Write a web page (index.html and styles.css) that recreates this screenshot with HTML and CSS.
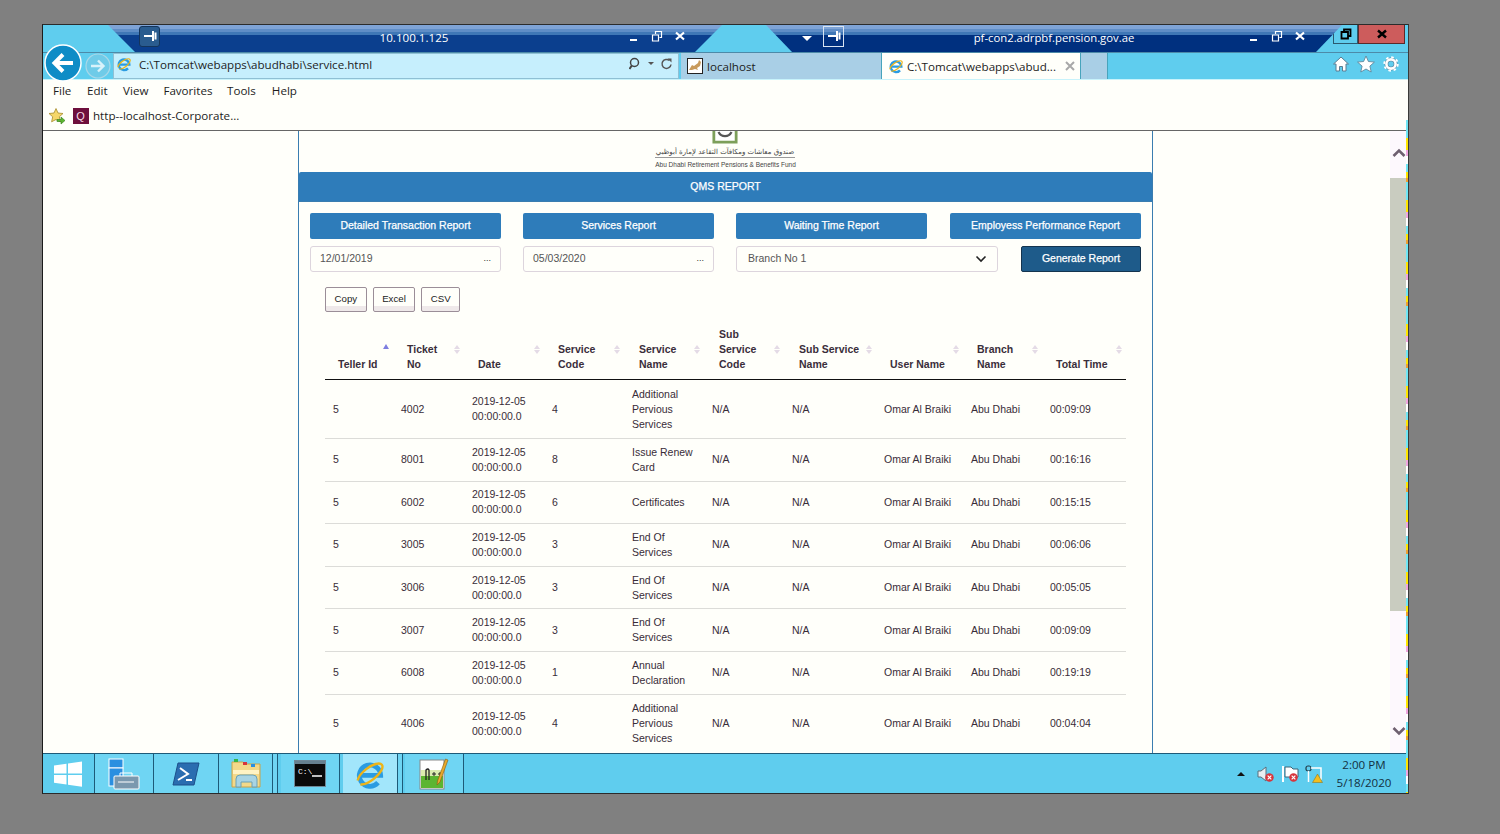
FILE: index.html
```html
<!DOCTYPE html>
<html lang="en">
<head>
<meta charset="utf-8">
<title>QMS Report</title>
<link rel="stylesheet" href="styles.css">
</head>
<body>
<svg class="defs" width="0" height="0" aria-hidden="true">
  <defs>
    <symbol id="pin" viewBox="0 0 14 14"><path d="M1 7h9M10 2v10M12.500 3.500v7" fill="none" stroke="#fff" stroke-width="2"/></symbol>
    <symbol id="min" viewBox="0 0 12 12"><path d="M2 10h7" stroke="#fff" stroke-width="2"/></symbol>
    <symbol id="rest" viewBox="0 0 12 12"><path d="M1.500 5h6v6h-6zM4.500 4V1.500h6v6H8.500" fill="none" stroke="#fff" stroke-width="1.200"/></symbol>
    <symbol id="cls" viewBox="0 0 12 12"><path d="M2 2.500l8 7M10 2.500l-8 7" stroke="#fff" stroke-width="2.200"/></symbol>
    <symbol id="ie" viewBox="0 0 24 24">
      <path d="M4.500 13H20A8 8 0 1 0 18 18.500" fill="none" stroke="#2a9ce2" stroke-width="3.600"/>
      <ellipse cx="12" cy="12" rx="11.300" ry="4.600" transform="rotate(-38 12 12)" fill="none" stroke="#eeb417" stroke-width="1.800" stroke-dasharray="24 4 30 0"/>
    </symbol>
    <symbol id="ring" viewBox="0 0 12 12"><circle cx="6" cy="6" r="4.600" fill="#d8343c"/><path d="M4 4l4 4M8 4l-4 4" stroke="#fff" stroke-width="1.300"/></symbol>
  </defs>
</svg>

<div class="win">
  <div class="titles">
    <div class="bar bar-one">
      <span class="pin pin-dark"><svg class="i14"><use href="#pin"/></svg></span>
      <span class="bar-title bar-title-one">10.100.1.125</span>
      <span class="ctls">
        <svg class="i12"><use href="#min"/></svg>
        <svg class="i12"><use href="#rest"/></svg>
        <svg class="i12"><use href="#cls"/></svg>
      </span>
    </div>
    <div class="bar bar-two">
      <span class="caret"></span>
      <span class="pin pin-line"><svg class="i14"><use href="#pin"/></svg></span>
      <span class="bar-title bar-title-two">pf-con2.adrpbf.pension.gov.ae</span>
      <span class="ctls">
        <svg class="i12"><use href="#min"/></svg>
        <svg class="i12"><use href="#rest"/></svg>
        <svg class="i12"><use href="#cls"/></svg>
      </span>
    </div>
    <div class="outer-ctl">
      <span class="outer-restore"><svg class="i12" viewBox="0 0 12 12"><path d="M1.500 4h6.500v6.500H1.500zM4 3.500V1.500h6.500V8H8.500" fill="none" stroke="#000" stroke-width="1.800"/></svg></span>
      <span class="outer-close"><svg class="i12" viewBox="0 0 12 12"><path d="M2 2.500l8 7M10 2.500l-8 7" stroke="#000" stroke-width="2.400"/></svg></span>
    </div>
  </div>

  <div class="tools">
    <svg class="back" viewBox="0 0 38 38"><circle cx="19" cy="19" r="18" fill="#0e8cc6" stroke="#fff" stroke-width="1.500"/><path d="M29 19H11M19 10.500L10.500 19l8.500 8.500" fill="none" stroke="#fff" stroke-width="4"/></svg>
    <svg class="forward" viewBox="0 0 26 26"><circle cx="13" cy="13" r="12" fill="#6fcbe8" stroke="#a8d8e8" stroke-width="1.200"/><path d="M6 13h12M13 7.500l5.500 5.500-5.500 5.500" fill="none" stroke="#d8f2fa" stroke-width="2.400"/></svg>
    <div class="address">
      <svg class="i16 addr-ie"><use href="#ie"/></svg>
      <span class="address-text">C:\Tomcat\webapps\abudhabi\service.html</span>
      <svg class="addr-tools" viewBox="0 0 48 14"><circle cx="5.500" cy="5.500" r="4" fill="none" stroke="#444" stroke-width="1.500"/><path d="M2.800 8.500L0.500 12" stroke="#444" stroke-width="2"/><path d="M19 5h6l-3 3z" fill="#555"/><path d="M40.500 3.500a4.500 4.500 0 1 0 1.500 4" fill="none" stroke="#555" stroke-width="1.500"/><path d="M38.500 1.500h4v4z" fill="#555"/></svg>
    </div>
    <div class="tab tab-off">
      <svg class="i16" viewBox="0 0 16 16"><rect x=".5" y=".5" width="15" height="15" fill="#fff" stroke="#222"/><path d="M2 12l3-5 2 1 4-3 1-3 2 2-1 4-3 2 1 2-3-1-3 1z" fill="#c89a5c"/></svg>
      <span>localhost</span>
    </div>
    <div class="tab tab-on">
      <svg class="i16"><use href="#ie"/></svg>
      <span class="tab-label">C:\Tomcat\webapps\abud...</span>
      <svg class="tab-x" viewBox="0 0 10 10"><path d="M1 1l8 8M9 1L1 9" stroke="#a8a8a8" stroke-width="2"/></svg>
    </div>
    <div class="tab tab-stub"></div>
    <div class="tool-icons">
      <svg class="i18" viewBox="0 0 18 18"><path d="M1.500 9L9 2l7.500 7H14v7h-3.500v-4.500h-3V16H4V9z" fill="#fff" stroke="#5a7d92"/></svg>
      <svg class="i18" viewBox="0 0 18 18"><path d="M9 1l2.400 5.500 6 .6-4.500 4 1.300 5.900L9 14l-5.200 3 1.300-5.900-4.500-4 6-.6z" fill="#fff" stroke="#5a7d92" stroke-width=".8"/></svg>
      <svg class="i18" viewBox="0 0 18 18"><circle cx="9" cy="9" r="4.600" fill="none" stroke="#5a7d92" stroke-width="3.800"/><circle cx="9" cy="9" r="4.600" fill="none" stroke="#fff" stroke-width="2.600"/><circle cx="9" cy="9" r="6.800" fill="none" stroke="#fff" stroke-width="1.800" stroke-dasharray="2.600 2.740"/></svg>
    </div>
  </div>

  <nav class="menu">
    <span class="m-file">File</span><span class="m-edit">Edit</span><span class="m-view">View</span><span class="m-fav">Favorites</span><span class="m-tools">Tools</span><span class="m-help">Help</span>
  </nav>

  <div class="favs">
    <svg class="i18" viewBox="0 0 18 18"><path d="M8 1.500l2 4.500 5 .5-3.700 3.300 1.100 5L8 12.500l-4.400 2.300 1.100-5L1 6.500 6 6z" fill="#f5d76a" stroke="#a68a2c" stroke-width=".8"/><path d="M9 12.500h4v-2.500l4 3.500-4 3.500v-2.500H9z" fill="#5cb531" stroke="#2f7a16" stroke-width=".6"/></svg>
    <span class="q-icon">Q</span>
    <span>http--localhost-Corporate...</span>
  </div>

  <div class="main">
    <div class="page">
      <div class="panel">
        <div class="logo">
          <svg class="logo-mark" viewBox="0 0 28 14"><path d="M2 0v12h24V0" fill="#fff" stroke="#7d9f5a" stroke-width="3"/><path d="M7 1c3 6 11 6 14 0" fill="none" stroke="#555" stroke-width="2.400"/></svg>
          <div class="logo-ar">صندوق معاشات ومكافآت التقاعد لإمارة أبوظبي</div>
          <div class="logo-en">Abu Dhabi Retirement Pensions &amp; Benefits Fund</div>
        </div>
        <div class="heading">QMS REPORT</div>
        <div class="report-row">
          <a class="btn btn-w">Detailed Transaction Report</a>
          <a class="btn btn-w">Services Report</a>
          <a class="btn btn-w">Waiting Time Report</a>
          <a class="btn btn-w">Employess Performance Report</a>
        </div>
        <div class="filter-row">
          <div class="field field-date"><span>12/01/2019</span><span class="dots">...</span></div>
          <div class="field field-date"><span>05/03/2020</span><span class="dots">...</span></div>
          <div class="field field-select"><span>Branch No 1</span><svg class="chev" viewBox="0 0 12 8"><path d="M1.500 1.500L6 6l4.500-4.500" fill="none" stroke="#222" stroke-width="1.600"/></svg></div>
          <a class="btn btn-gen">Generate Report</a>
        </div>
        <div class="dt-buttons">
          <a class="dt-btn">Copy</a>
          <a class="dt-btn">Excel</a>
          <a class="dt-btn">CSV</a>
        </div>
        <table class="report">
          <colgroup>
            <col class="c68"><col class="c71"><col class="c80"><col class="c80"><col class="c80"><col class="c80"><col class="c92"><col class="c87"><col class="c79"><col class="c84">
          </colgroup>
          <thead>
            <tr>
              <th class="sort-asc">Teller Id</th>
              <th>Ticket<br>No</th>
              <th>Date</th>
              <th>Service<br>Code</th>
              <th>Service<br>Name</th>
              <th>Sub<br>Service<br>Code</th>
              <th>Sub Service<br>Name</th>
              <th>User Name</th>
              <th>Branch<br>Name</th>
              <th>Total Time</th>
            </tr>
          </thead>
          <tbody>
            <tr class="tall"><td>5</td><td>4002</td><td>2019-12-05<br>00:00:00.0</td><td>4</td><td>Additional<br>Pervious<br>Services</td><td>N/A</td><td>N/A</td><td>Omar Al Braiki</td><td>Abu Dhabi</td><td>00:09:09</td></tr>
            <tr><td>5</td><td>8001</td><td>2019-12-05<br>00:00:00.0</td><td>8</td><td>Issue Renew<br>Card</td><td>N/A</td><td>N/A</td><td>Omar Al Braiki</td><td>Abu Dhabi</td><td>00:16:16</td></tr>
            <tr><td>5</td><td>6002</td><td>2019-12-05<br>00:00:00.0</td><td>6</td><td>Certificates</td><td>N/A</td><td>N/A</td><td>Omar Al Braiki</td><td>Abu Dhabi</td><td>00:15:15</td></tr>
            <tr><td>5</td><td>3005</td><td>2019-12-05<br>00:00:00.0</td><td>3</td><td>End Of<br>Services</td><td>N/A</td><td>N/A</td><td>Omar Al Braiki</td><td>Abu Dhabi</td><td>00:06:06</td></tr>
            <tr><td>5</td><td>3006</td><td>2019-12-05<br>00:00:00.0</td><td>3</td><td>End Of<br>Services</td><td>N/A</td><td>N/A</td><td>Omar Al Braiki</td><td>Abu Dhabi</td><td>00:05:05</td></tr>
            <tr><td>5</td><td>3007</td><td>2019-12-05<br>00:00:00.0</td><td>3</td><td>End Of<br>Services</td><td>N/A</td><td>N/A</td><td>Omar Al Braiki</td><td>Abu Dhabi</td><td>00:09:09</td></tr>
            <tr><td>5</td><td>6008</td><td>2019-12-05<br>00:00:00.0</td><td>1</td><td>Annual<br>Declaration</td><td>N/A</td><td>N/A</td><td>Omar Al Braiki</td><td>Abu Dhabi</td><td>00:19:19</td></tr>
            <tr class="tall"><td>5</td><td>4006</td><td>2019-12-05<br>00:00:00.0</td><td>4</td><td>Additional<br>Pervious<br>Services</td><td>N/A</td><td>N/A</td><td>Omar Al Braiki</td><td>Abu Dhabi</td><td>00:04:04</td></tr>
          </tbody>
        </table>
      </div>
    </div>
    <div class="scroll">
      <svg class="scroll-up" viewBox="0 0 14 10"><path d="M1.500 8L7 2.500 12.500 8" fill="none" stroke="#6e5f70" stroke-width="2.600"/></svg>
      <div class="thumb"></div>
      <svg class="scroll-down" viewBox="0 0 14 10"><path d="M1.500 2L7 7.500 12.500 2" fill="none" stroke="#6e5f70" stroke-width="2.600"/></svg>
    </div>
  </div>

  <div class="taskbar">
    <div class="task t-start"><svg class="i26" viewBox="0 0 28 26"><path d="M0 4.500L12.500 2.800v9.600H0zM14 2.600L28 .5v11.900H14zM0 14h12.500v9.500L0 21.800zM14 14h14v11.800L14 23.700z" fill="#fff"/></svg></div>
    <div class="task t-58"><svg class="i32" viewBox="0 0 32 32"><rect x="1" y="1" width="14" height="9" fill="#2a8fe0" stroke="#fff"/><rect x="1" y="10" width="14" height="18" fill="#2a8fe0" stroke="#fff"/><rect x="6" y="18" width="25" height="13" rx="1" fill="#7a98ae" stroke="#fff"/><path d="M12 18v-3h12v3" fill="none" stroke="#fff"/><path d="M10 24h16" stroke="#fff"/></svg></div>
    <div class="task t-64"><svg class="i28" viewBox="0 0 28 24"><path d="M6 1h21l-5 22H1z" fill="#2a6db0" stroke="#1c4f8a"/><path d="M8 6l8 6-10 6M14 18h6" fill="none" stroke="#fff" stroke-width="2"/></svg></div>
    <div class="task t-54"><svg class="i32" viewBox="0 0 32 32"><path d="M2 4h11l2 2h15v23H2z" fill="#f3d98a" stroke="#c9a34a"/><rect x="4" y="1" width="4" height="3" fill="#36b54a"/><rect x="13" y="4" width="4" height="3" fill="#d8343c"/><rect x="21" y="6" width="4" height="3" fill="#2a8fe0"/><path d="M3 12h26v4H3z" fill="#fff3c4"/><path d="M6 29v-8q0-4 4-4h13q4 0 4 4v8h-5v-5h-11v5z" fill="#a8d4e4" stroke="#6ba1b6"/></svg></div>
    <div class="task t-5"></div>
    <div class="task t-58"><svg class="i32" viewBox="0 0 32 28"><rect x=".5" y=".5" width="31" height="26" fill="#0a0a0a" stroke="#6f8796"/><rect x="1" y="1" width="30" height="3" fill="#66808f"/><text x="4" y="14" class="cmd-text">C:\</text><path d="M18 16h10" stroke="#fff" stroke-width="1.500"/></svg></div>
    <div class="task t-56 t-active"><svg class="i32"><use href="#ie"/></svg></div>
    <div class="task t-5 t-5b"></div>
    <div class="task t-58"><svg class="i32" viewBox="0 0 32 32"><rect x="2" y="2" width="24" height="29" fill="#fff" stroke="#8a8a8a"/><path d="M3 18h22v12H3z" fill="#5cb531"/><path d="M3 12h22v6H3z" fill="#dcebb0"/><path d="M8 22V12q2-2 3 0v10" fill="none" stroke="#222" stroke-width="1.300"/><path d="M14 16h4M16 14v4M20 16h4M22 14v4" stroke="#222"/><path d="M30 2l-8 22-3 3 .5-4 8-22z" fill="#e8a92c" stroke="#8a5a10" stroke-width=".6"/></svg></div>
    <div class="tray">
      <span class="tray-up"></span>
      <svg class="i18" viewBox="0 0 18 18"><path d="M1 6h3l5-4v14l-5-4H1z" fill="#e8eef2" stroke="#5b6f7c"/><use href="#ring" x="7" y="7" width="11" height="11"/></svg>
      <svg class="i18" viewBox="0 0 18 18"><path d="M2 1v16" stroke="#fff" stroke-width="2"/><path d="M4 2h6l2 2h5v8H4z" fill="#fff" stroke="#3d6578"/><use href="#ring" x="7" y="7" width="11" height="11"/></svg>
      <svg class="i18" viewBox="0 0 18 18"><rect x="1" y="1" width="5" height="5" rx="2" fill="none" stroke="#223b48" stroke-width="1.200"/><path d="M3.500 6v11M6 3h10v11h-5" fill="none" stroke="#fff" stroke-width="1.500"/><path d="M12.500 9l5 8.500h-10z" fill="#f2bd1d" stroke="#8a6a10" stroke-width=".5"/></svg>
      <div class="clock"><span>2:00 PM</span><span>5/18/2020</span></div>
    </div>
  </div>

  <div class="edge-noise"></div>
</div>
</body>
</html>
```

FILE: styles.css
```css
* { box-sizing: border-box; }
html, body { margin: 0; height: 100%; }
body {
  background: #808080;
  overflow: hidden;
  padding: 24px 0 0 42px;
  font-family: "Open Sans", "Noto Sans", sans-serif;
  color: #1d1d1d;
}
.defs { position: absolute; }
.i12 { width: 12px; height: 12px; display: block; }
.i14 { width: 14px; height: 14px; display: block; }
.i16 { width: 16px; height: 16px; display: block; flex: none; }
.i18 { width: 18px; height: 18px; display: block; flex: none; }
.i26 { width: 28px; height: 26px; display: block; }
.i28 { width: 28px; height: 24px; display: block; }
.i32 { width: 32px; height: 32px; display: block; }

.win {
  position: relative;
  width: 1367px;
  height: 770px;
  display: flex;
  flex-direction: column;
  border-top: 1px solid #2b2b2b;
  border-bottom: 1px solid #2b2b2b;
  border-left: 1px solid #1c1c1c;
  border-right: 1px solid #3a3a3a;
  background: #fffffa;
}

/* remote-session title bars */
.titles {
  height: 27px;
  display: flex;
  background: #5fcdee;
  padding-left: 65px;
}
.bar {
  position: relative;
  z-index: 1;
  height: 27px;
  display: flex;
  align-items: center;
  color: #fff;
  font-size: 11.600px;
}
.bar-one {
  width: 614px;
  padding-left: 31px;
  clip-path: polygon(0 0, 100% 0, 587px 100%, 27px 100%);
  background: linear-gradient(#7ea3d6 0, #7ea3d6 4px, #5f8dc6 4px, #5f8dc6 7px, #3f77b6 7px, #3f77b6 10px, #0b3f8e 10px);
}
.bar-two {
  width: 576px;
  margin-left: 44px;
  padding-left: 37px;
  clip-path: polygon(0 0, 100% 0, 550px 100%, 26px 100%);
  background: linear-gradient(#7ea3d6 0, #7ea3d6 4px, #5f8dc6 4px, #5f8dc6 7px, #3f77b6 7px, #3f77b6 10px, #00307f 10px);
}
.bar-title { flex: 1; text-align: center; padding-bottom: 3px; white-space: nowrap; }
.bar-title-one { padding-left: 40px; }
.bar-title-two { padding-left: 16px; font-size: 11.300px; }
.ctls { display: flex; gap: 11px; align-items: center; padding-bottom: 5px; }
.bar-one .ctls { padding-right: 36px; }
.bar-two .ctls { padding-right: 36px; }
.pin {
  width: 21px;
  height: 21px;
  display: flex;
  align-items: center;
  justify-content: center;
  margin-top: -5px;
}
.pin-dark { background: #2a5c8f; border: 1px solid #14355c; border-radius: 3px; }
.pin-line { border: 1px solid #d8e4f2; margin-left: 11px; }
.caret {
  width: 0;
  height: 0;
  margin-left: -1px;
  border: 5px solid transparent;
  border-top: 5px solid #fff;
  border-bottom: 0;
}
.outer-ctl { display: flex; margin-left: -9px; height: 19px; }
.outer-restore {
  width: 25px;
  display: flex;
  align-items: center;
  justify-content: center;
  border: 1px solid #2b5a70;
  border-top: 0;
}
.outer-close {
  width: 47px;
  display: flex;
  align-items: center;
  justify-content: center;
  background: #cd5c5c;
  border: 1px solid #5b2a2a;
  border-top: 0;
}

/* address bar and tabs */
.tools {
  height: 28px;
  display: flex;
  align-items: center;
  background: #5fcdee;
  border-top: 1px solid #4d8aa8;
  border-bottom: 1px solid #c8f3fb;
}
.back {
  width: 38px;
  height: 38px;
  margin: -6px 0 0 1px;
  flex: none;
  position: relative;
  z-index: 2;
}
.forward { width: 26px; height: 26px; margin-left: 3px; flex: none; }
.address {
  width: 566px;
  height: 26px;
  margin-left: 2px;
  display: flex;
  align-items: center;
  gap: 5px;
  padding: 0 0 4px 2px;
  background: #c6effd;
  border: 1px solid #8fc0d4;
  font-size: 11.600px;
}
.address-text { flex: 1; white-space: nowrap; padding-left: 2px; }
.addr-tools { width: 48px; height: 14px; margin-right: 1px; flex: none; }
.tab {
  height: 26px;
  display: flex;
  align-items: center;
  font-size: 11.600px;
  border-right: 1px solid #47a4bc;
}
.tab-off { width: 201px; margin-left: 2px; padding-left: 6px; gap: 4px; background: #a9cfe6; }
.tab-on { width: 199px; padding-left: 6px; gap: 3px; background: #fffffa; }
.tab-label { flex: 1; white-space: nowrap; }
.tab-x { width: 10px; height: 10px; margin-right: 5px; flex: none; }
.tab-stub { width: 27px; background: #a9cfe6; }
.tool-icons {
  flex: 1;
  display: flex;
  justify-content: flex-end;
  gap: 7px;
  padding: 0 8px 4px 0;
}

/* menu and favourites */
.menu {
  height: 23px;
  padding: 0 0 2px 10px;
  display: flex;
  align-items: center;
  font-size: 11.600px;
  background: #fffffa;
}
.m-edit { margin-left: 15.600px; }
.m-view { margin-left: 15.500px; }
.m-fav { margin-left: 15px; }
.m-tools { margin-left: 14.600px; }
.m-help { margin-left: 16px; }
.favs {
  height: 28px;
  padding: 0 0 2px 5px;
  display: flex;
  align-items: center;
  gap: 6.500px;
  font-size: 11.600px;
  background: #fffffa;
  border-bottom: 1px solid #666;
}
.q-icon {
  width: 16px;
  height: 16px;
  margin-left: 0;
  margin-right: -2px;
  background: #6e0f3c;
  color: #f5d8e4;
  font: 11px/16px "Liberation Sans", sans-serif;
  text-align: center;
}

/* page */
.main { height: 622px; display: flex; background: #fffffa; }
.page { flex: 1; overflow: hidden; }
.panel {
  width: 855px;
  margin-left: 255px;
  height: 700px;
  border-left: 1px solid #3a7db0;
  border-right: 1px solid #3a7db0;
  font-family: "Liberation Sans", Arial, sans-serif;
  color: #382c38;
}
.logo {
  height: 41px;
  text-align: center;
  color: #444;
  overflow: hidden;
}
.logo-mark { display: block; width: 28px; height: 13px; margin: 0 auto; transform: translateX(-1px); }
.logo-ar {
  margin-top: 3px;
  font: 7px/10px "DejaVu Sans", sans-serif;
  width: 140px;
  margin-left: 356px;
  border-bottom: 1px solid #9a9a9a;
  white-space: nowrap;
  overflow: hidden;
  direction: rtl;
}
.logo-en {
  font: 6.500px/9px "Liberation Sans", sans-serif;
  white-space: nowrap;
  margin-top: 2px;
}
.heading {
  height: 30px;
  line-height: 29px;
  text-align: center;
  color: #fff;
  font-size: 10.500px;
  -webkit-text-stroke: .25px #fff;
  background: #2e7cba;
  border-radius: 2px 2px 0 0;
  border-bottom: 1px solid #3a7db0;
}
.report-row {
  display: flex;
  gap: 22px;
  padding-left: 11px;
  margin-top: 11px;
}
.btn {
  height: 26px;
  padding-bottom: 2px;
  display: flex;
  align-items: center;
  justify-content: center;
  color: #fff;
  font-size: 10.500px;
  -webkit-text-stroke: .25px #fff;
  background: #2e7cba;
  border-radius: 2px;
  white-space: nowrap;
}
.btn-w { width: 191px; }
.btn-w:last-child { margin-left: 1px; }
.filter-row {
  display: flex;
  gap: 22px;
  padding-left: 11px;
  margin-top: 7px;
}
.field {
  height: 26px;
  padding-bottom: 2px;
  display: flex;
  align-items: center;
  justify-content: space-between;
  background: #fffffa;
  border: 1px solid #ddd5dd;
  border-radius: 3px;
  font-size: 10.500px;
  color: #555;
}
.field-date { width: 191px; padding: 0 9px 2px; }
.field-select { width: 262px; padding: 0 10px 0 11px; }
.field-select span { padding-bottom: 2px; }
.dots { font-size: 9px; color: #333; }
.chev { width: 12px; height: 8px; }
.btn-gen { width: 120px; margin-left: 1px; background: #1e5b8a; border: 1px solid #14344f; }
.dt-buttons {
  display: flex;
  gap: 6px;
  margin: 15px 0 0 26px;
}
.dt-btn {
  height: 25px;
  padding: 0 8.500px 2px;
  display: flex;
  align-items: center;
  font-size: 9.700px;
  color: #222;
  background: linear-gradient(#fffffa 0, #fffffa 80%, #efe9ea 80%);
  border: 1px solid #9b8e98;
  border-radius: 2px;
}

/* table */
.report {
  table-layout: fixed;
  width: 801px;
  margin: 7px 0 0 26px;
  border-collapse: separate;
  border-spacing: 0;
  font-size: 10.500px;
  line-height: 15px;
}
.c68 { width: 68px; }
.c71 { width: 71px; }
.c80 { width: 80px; }
.c84 { width: 84px; }
.c87 { width: 87px; }
.c92 { width: 92px; }
.c79 { width: 79px; }
.report th {
  position: relative;
  padding: 8px 0 7px 14px;
  text-align: left;
  vertical-align: bottom;
  font-weight: bold;
  border-bottom: 1px solid #111;
  color: #3a2e3a;
  white-space: nowrap;
}
.report th.sort-asc { padding-left: 13px; }
.report th:nth-child(5),
.report th:nth-child(6),
.report th:nth-child(7) { padding-left: 15px; }
.report th::before,
.report th::after {
  content: "";
  position: absolute;
  right: 4px;
  width: 0;
  height: 0;
  border-left: 3.500px solid transparent;
  border-right: 3.500px solid transparent;
}
.report th::before { bottom: 30px; border-bottom: 4px solid #e4dbe6; }
.report th::after { bottom: 25px; border-top: 4px solid #e4dbe6; }
.report th.sort-asc::before { bottom: 30px; border-bottom: 5px solid #7e7ee0; }
.report th.sort-asc::after { display: none; }
.report td {
  padding: 5.800px 4px 5.800px 8px;
  vertical-align: middle;
  border-bottom: 1px solid #dcdcd8;
  white-space: nowrap;
}
.report .tall td { padding: 6.500px 4px 6.500px 8px; }

/* scrollbar */
.scroll {
  width: 16px;
  margin-right: 2px;
  position: relative;
  background: #fdf8fd;
  display: flex;
  flex-direction: column;
  align-items: center;
}
.scroll-up { width: 14px; height: 10px; margin: 17px 0 20px 2px; flex: none; }
.thumb { width: 16px; height: 433px; background: #c9ccc0; flex: none; }
.scroll-down { width: 14px; height: 10px; margin: 115px 0 0 2px; flex: none; }

/* taskbar */
.taskbar {
  height: 40px;
  display: flex;
  background: #5fcdee;
  border-top: 1px solid #1d5a78;
}
.task {
  height: 39px;
  display: flex;
  align-items: center;
  justify-content: center;
  flex: none;
  border-right: 1px solid #1d5a78;
}
.t-start { width: 52px; background: #5fcdee; }
.t-58 { width: 59px; background: #6fd5f3; }
.t-56 { width: 55px; margin-left: 3px; }
.t-64 { width: 65px; background: #6fd5f3; }
.t-54 { width: 54px; background: #6fd5f3; }
.t-5 { width: 5px; margin-right: 3px; background: #6fd5f3; }
.t-5b { margin-right: 2px; }
.t-active { background: #a2e6fb; }
.t-start .i26 { margin-left: -2px; }
.cmd-text { font: 8px "Liberation Mono", monospace; fill: #fff; }
.tray {
  flex: 1;
  display: flex;
  align-items: center;
  justify-content: flex-end;
  gap: 6px;
  padding-right: 8px;
}
.tray-up {
  width: 0;
  height: 0;
  margin-right: 6px;
  border-left: 4px solid transparent;
  border-right: 4px solid transparent;
  border-bottom: 4px solid #111;
}
.clock {
  width: 72px;
  margin-left: -1px;
  display: flex;
  flex-direction: column;
  align-items: center;
  font-size: 11.600px;
  line-height: 17.500px;
  color: #13303f;
}

/* colour noise along the right edge of the remote picture */
.edge-noise {
  position: absolute;
  right: 0;
  top: 95px;
  bottom: 0;
  width: 2px;
  background:
    repeating-linear-gradient(#6fe6f5 0 18px, #ffe600 18px 30px, #f0a6e0 30px 36px, #fff 36px 44px, #6fe6f5 44px 52px, #ffe600 52px 58px, #f0a030 58px 62px);
}
```
